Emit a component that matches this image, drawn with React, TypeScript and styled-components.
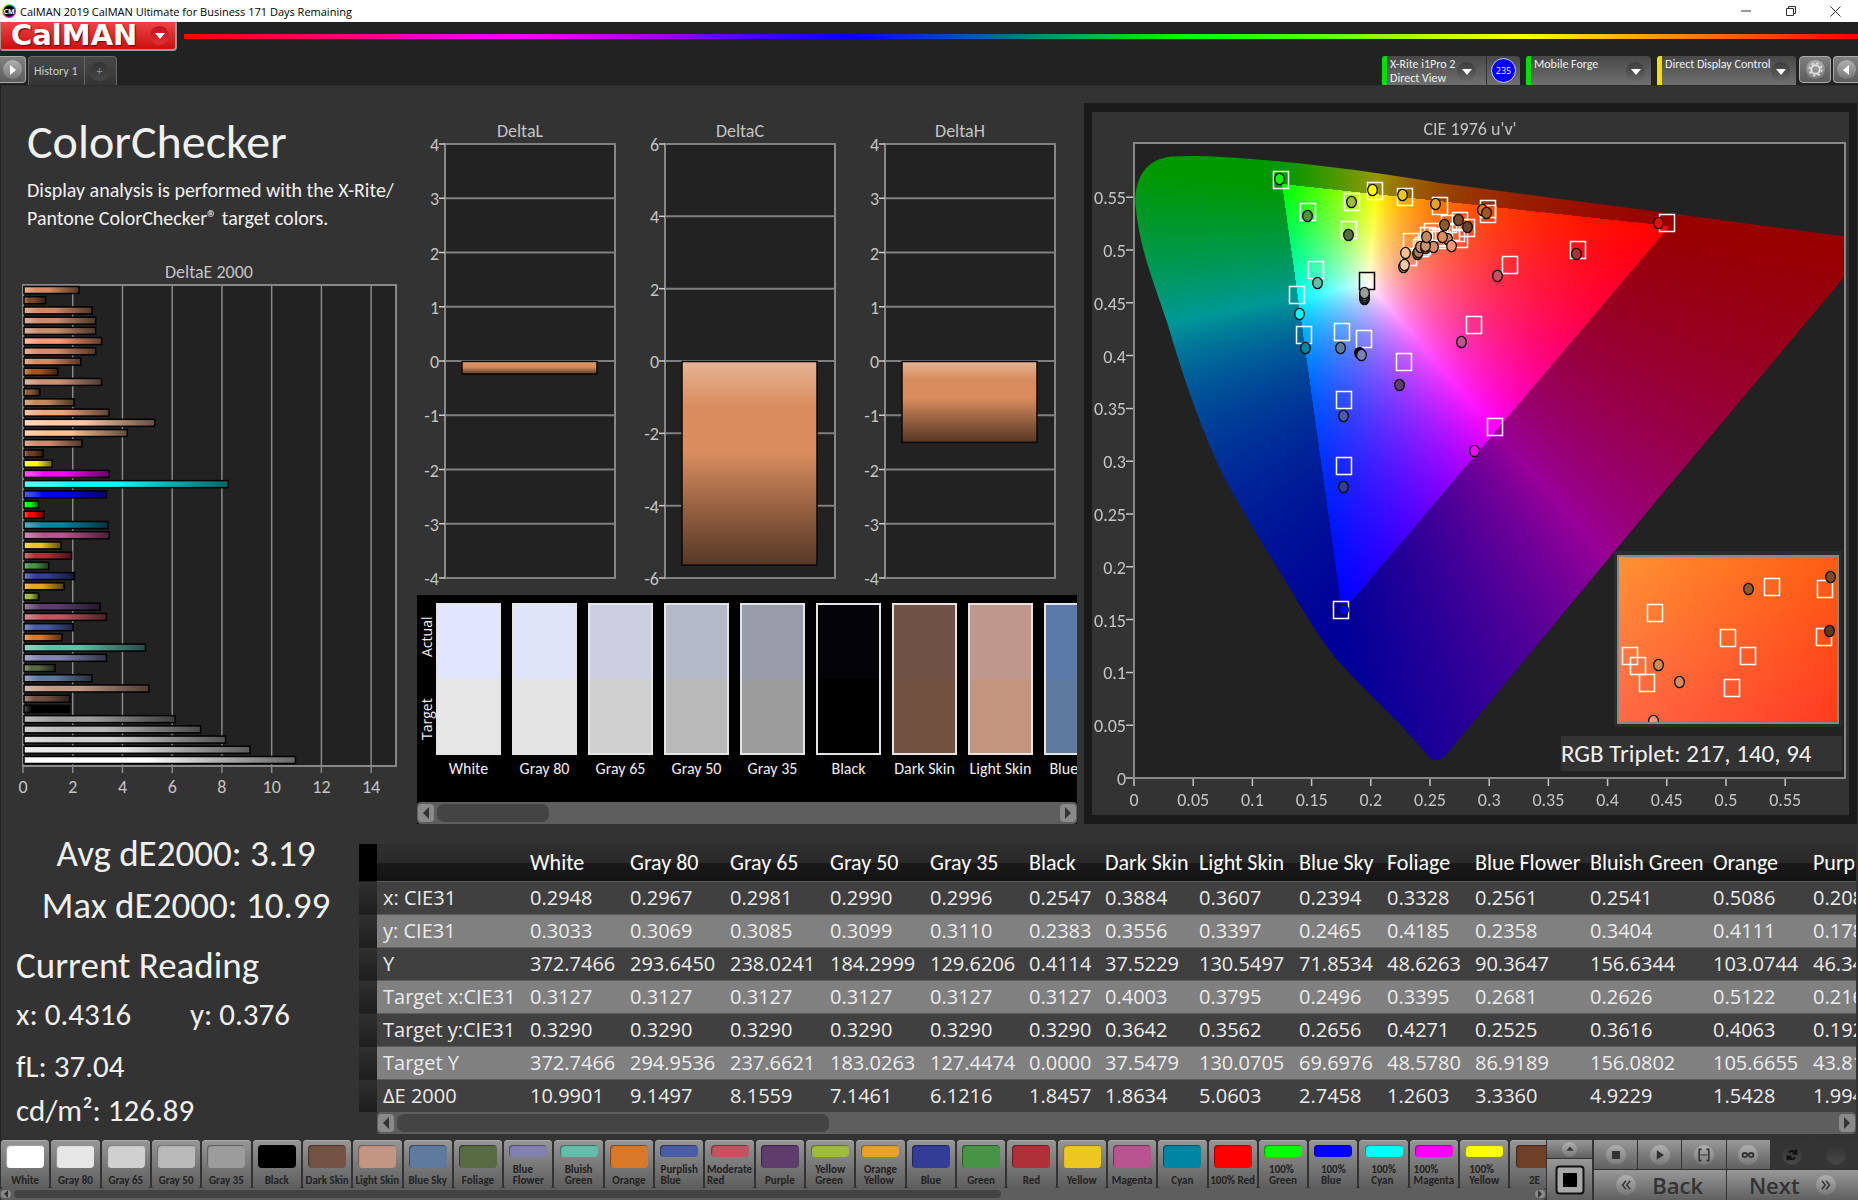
import React, { useLayoutEffect, useRef } from "react";
import styled, { createGlobalStyle } from "styled-components";

const humanist = `Carlito, Lato, "Open Sans", sans-serif`;
const interfaceFont = `"Open Sans", "Noto Sans", sans-serif`;

const GlobalStyle = createGlobalStyle`
  *, *::before, *::after { box-sizing: border-box; }
  body { margin: 0; background: #333; color: #f0f0f0; font-family: ${humanist}; }
  button { font: inherit; color: inherit; border: 0; margin: 0; padding: 0; cursor: pointer; }
  h1, h2, p { margin: 0; font-weight: 400; }
  svg, canvas { display: block; }
`;

/* ---------- data ---------- */

type Patch = { name: string; color: string; lines?: string[] };

const patches: Patch[] = [
  { name: "White", color: "#ffffff" },
  { name: "Gray 80", color: "#e6e6e6" },
  { name: "Gray 65", color: "#d0d0d0" },
  { name: "Gray 50", color: "#b9b9b9" },
  { name: "Gray 35", color: "#9c9c9c" },
  { name: "Black", color: "#000000" },
  { name: "Dark Skin", color: "#735244" },
  { name: "Light Skin", color: "#c29682" },
  { name: "Blue Sky", color: "#5e7a9c" },
  { name: "Foliage", color: "#596b42" },
  { name: "Blue Flower", color: "#8280b0", lines: ["Blue", "Flower"] },
  { name: "Bluish Green", color: "#63bda8", lines: ["Bluish", "Green"] },
  { name: "Orange", color: "#d97829" },
  { name: "Purplish Blue", color: "#4a5ca3", lines: ["Purplish", "Blue"] },
  { name: "Moderate Red", color: "#c25461", lines: ["Moderate", "Red"] },
  { name: "Purple", color: "#5c3d6b" },
  { name: "Yellow Green", color: "#9ebb40", lines: ["Yellow", "Green"] },
  { name: "Orange Yellow", color: "#e6a12e", lines: ["Orange", "Yellow"] },
  { name: "Blue", color: "#333d96" },
  { name: "Green", color: "#479447" },
  { name: "Red", color: "#b03038" },
  { name: "Yellow", color: "#edc721" },
  { name: "Magenta", color: "#ba5491" },
  { name: "Cyan", color: "#0085a3" },
  { name: "100% Red", color: "#ff0000" },
  { name: "100% Green", color: "#00ff00", lines: ["100%", "Green"] },
  { name: "100% Blue", color: "#0000ff", lines: ["100%", "Blue"] },
  { name: "100% Cyan", color: "#00ffff", lines: ["100%", "Cyan"] },
  { name: "100% Magenta", color: "#ff00ff", lines: ["100%", "Magenta"] },
  { name: "100% Yellow", color: "#ffff00", lines: ["100%", "Yellow"] },
  { name: "2E", color: "#6f4028" },
];

const deltaE: [number, string][] = [
  [2.22, "#d98c5e"], [0.88, "#7a4a28"], [2.76, "#cc8a66"], [2.9, "#c98b6c"], [2.9, "#c68e6c"],
  [3.14, "#ff9a72"], [2.9, "#d68a68"], [2.3, "#d98860"], [1.37, "#a3561f"], [3.14, "#c99476"],
  [0.64, "#8a5a32"], [2.03, "#c08a5a"], [3.44, "#f2a67c"], [5.29, "#ffc8a8"], [4.18, "#ffc090"],
  [2.35, "#c98b68"], [0.78, "#6f4028"], [1.14, "#ffff00"], [3.45, "#ff00ff"], [8.27, "#00ffff"],
  [3.34, "#0000ff"], [0.59, "#00ff00"], [0.82, "#ff0000"], [3.4, "#0085a3"], [3.45, "#ba5491"],
  [1.5, "#edc721"], [1.93, "#b03038"], [1.0, "#479447"], [2.04, "#333d96"], [1.62, "#e6a12e"],
  [0.59, "#9ebb40"], [3.08, "#5c3d6b"], [3.34, "#c25461"], [1.99, "#4a5ca3"], [1.54, "#d97829"],
  [4.92, "#63bda8"], [3.34, "#8280b0"], [1.26, "#596b42"], [2.75, "#5e7a9c"], [5.06, "#c29682"],
  [1.86, "#735244"], [1.85, "#000000"], [6.12, "#9c9c9c"], [7.15, "#b9b9b9"], [8.16, "#d0d0d0"],
  [9.15, "#e6e6e6"], [10.99, "#ffffff"],
];

const swatches = [
  { name: "White", actual: "#e1e5ff", target: "#e6e6e6" },
  { name: "Gray 80", actual: "#dfe4f8", target: "#e4e4e4" },
  { name: "Gray 65", actual: "#cbcfe1", target: "#d0d0d0" },
  { name: "Gray 50", actual: "#b4b9c9", target: "#b9b9b9" },
  { name: "Gray 35", actual: "#999cab", target: "#9c9c9c" },
  { name: "Black", actual: "#030308", target: "#000000" },
  { name: "Dark Skin", actual: "#6f5146", target: "#735141" },
  { name: "Light Skin", actual: "#bf978c", target: "#c3957f" },
  { name: "Blue Sky", actual: "#5b7aaa", target: "#5d7b9e" },
];

const tableColumns: [string, number][] = [
  ["White", 100], ["Gray 80", 100], ["Gray 65", 100], ["Gray 50", 100], ["Gray 35", 99],
  ["Black", 76], ["Dark Skin", 94], ["Light Skin", 100], ["Blue Sky", 88], ["Foliage", 88],
  ["Blue Flower", 115], ["Bluish Green", 123], ["Orange", 100], ["Purplish Blue", 130],
];

const tableRows: [string, string[]][] = [
  ["x: CIE31", "0.2948 0.2967 0.2981 0.2990 0.2996 0.2547 0.3884 0.3607 0.2394 0.3328 0.2561 0.2541 0.5086 0.2083".split(" ")],
  ["y: CIE31", "0.3033 0.3069 0.3085 0.3099 0.3110 0.2383 0.3556 0.3397 0.2465 0.4185 0.2358 0.3404 0.4111 0.1782".split(" ")],
  ["Y", "372.7466 293.6450 238.0241 184.2999 129.6206 0.4114 37.5229 130.5497 71.8534 48.6263 90.3647 156.6344 103.0744 46.3477".split(" ")],
  ["Target x:CIE31", "0.3127 0.3127 0.3127 0.3127 0.3127 0.3127 0.4003 0.3795 0.2496 0.3395 0.2681 0.2626 0.5122 0.2160".split(" ")],
  ["Target y:CIE31", "0.3290 0.3290 0.3290 0.3290 0.3290 0.3290 0.3642 0.3562 0.2656 0.4271 0.2525 0.3616 0.4063 0.1921".split(" ")],
  ["Target Y", "372.7466 294.9536 237.6621 183.0263 127.4474 0.0000 37.5479 130.0705 69.6976 48.5780 86.9189 156.0802 105.6655 43.8112".split(" ")],
  ["ΔE 2000", "10.9901 9.1497 8.1559 7.1461 6.1216 1.8457 1.8634 5.0603 2.7458 1.2603 3.3360 4.9229 1.5428 1.9940".split(" ")],
];

/* ---------- frame ---------- */

const Shell = styled.div`
  min-height: 100vh;
  display: flex;
  flex-direction: column;
  background: #222;
  overflow: hidden;
`;

const TitleBar = styled.header`
  height: 22px;
  flex: none;
  display: flex;
  align-items: center;
  gap: 4px;
  padding: 0 2px;
  background: #fff;
  color: #000;
  font: 11px ${interfaceFont};
`;

const AppBadge = styled.span`
  width: 14px;
  height: 14px;
  display: grid;
  place-items: center;
  border-radius: 50%;
  color: #fff;
  font-size: 7px;
  font-weight: 700;
  background: radial-gradient(circle, #000 5px, transparent 6px),
    conic-gradient(#4f4, #06f, #80f, #f0c, #f60, #fe0, #4f4);
`;

const TitleText = styled.span`
  flex: 1;
  white-space: nowrap;
`;

const WindowButton = styled.button`
  width: 41px;
  height: 22px;
  display: grid;
  place-items: center;
  background: none;
`;

const BrandRow = styled.div`
  height: 33px;
  flex: none;
  display: flex;
  align-items: flex-start;
  gap: 7px;
`;

const BrandButton = styled.button`
  && { color: #fff; }
  width: 177px;
  height: 29px;
  display: flex;
  align-items: center;
  justify-content: space-between;
  padding: 0 6px 0 10px;
  border: 1px solid #999;
  border-width: 0 2px 2px 1px;
  border-radius: 0 0 4px 3px;
  background: linear-gradient(#e44, #c91010);
`;

const BrandName = styled.span`
  font: 700 29px/27px "DejaVu Sans", sans-serif;
  text-shadow: 1px 1px 1px #600;
`;

const Spectrum = styled.div`
  flex: 1;
  height: 5px;
  margin-top: 12px;
  background: linear-gradient(90deg, #f00, #f0f, #00f, #0f0, #ff0, #f00);
`;

const Toolbar = styled.nav`
  height: 31px;
  flex: none;
  display: flex;
  align-items: flex-start;
  padding-top: 1px;
  border-bottom: 1px solid #2c2c2c;
  font-size: 12px;
`;

const Disc = styled.span<{ $size: number; $tone?: "red" | "dark" | "dim" | "light" }>`
  width: ${(p) => p.$size}px;
  height: ${(p) => p.$size}px;
  flex: none;
  display: grid;
  place-items: center;
  border-radius: 50%;
  background: ${(p) =>
    ({
      red: "linear-gradient(#c01020, #e23030)",
      dark: "linear-gradient(#3c3c3c, #666)",
      dim: "linear-gradient(#333, #484848)",
      light: "linear-gradient(#b0b0b0, #787878)",
    })[p.$tone ?? "dark"]};
`;

const SquareButton = styled.button<{ $width: number; $side?: "left" | "right" }>`
  width: ${(p) => p.$width}px;
  height: 27px;
  display: grid;
  place-items: center;
  border: 1px solid #aaa;
  border-left-width: ${(p) => (p.$side === "left" ? 0 : 1)}px;
  border-right-width: ${(p) => (p.$side === "right" ? 0 : 1)}px;
  border-radius: ${(p) => (p.$side === "left" ? "0 4px 4px 0" : p.$side === "right" ? "4px 0 0 4px" : "4px")};
  background: linear-gradient(#808080, #5c5c5c);
`;

const TabGroup = styled.div`
  display: flex;
  margin-left: 2px;
  border: 1px solid #666;
  border-bottom: 0;
  border-radius: 4px 4px 0 0;
  background: linear-gradient(#484848, #353535);
`;

const Tab = styled.button`
  height: 28px;
  min-width: 32px;
  padding: 0 6px 0 5px;
  display: grid;
  place-items: center;
  background: none;
  && { color: #ccc; }
  & + & { border-left: 1px solid #666; }
  & > ${Disc} { color: #888; }
`;

const Devices = styled.div`
  display: flex;
  gap: 6px;
  margin-left: auto;
`;

const Device = styled.div<{ $color: string; $width: number }>`
  width: ${(p) => p.$width}px;
  height: 29px;
  display: flex;
  border-left: 5px solid ${(p) => p.$color};
  border-radius: 3px 4px 0 0;
  background: linear-gradient(#484848, #707070);
`;

const DeviceMenu = styled.button`
  flex: 1;
  display: flex;
  justify-content: space-between;
  padding: 0 6px 0 3px;
  background: none;
  text-align: left;
  line-height: 14px;
  white-space: nowrap;
  && { color: #eee; }
  &:not(:last-child) { padding-right: 10px; }
  & > ${Disc} { margin-top: 6px; margin-left: -8px; }
`;

const DeviceName = styled.span`
  padding-top: 1px;
`;

const LevelButton = styled.button`
  width: 34px;
  display: grid;
  place-items: center;
  background: none;
  && { border-left: 1px solid #333; }
`;

const Level = styled.span`
  width: 25px;
  height: 25px;
  display: grid;
  place-items: center;
  border: 1px solid #ccd;
  border-radius: 50%;
  background: #00f;
  font: 9px ${interfaceFont};
`;

const ToolButtons = styled.div`
  display: flex;
  gap: 2px;
  margin-left: 3px;
`;

/* ---------- workspace ---------- */

const Workspace = styled.main`
  flex: 1;
  border-left: 1px solid #222;
  padding-top: 17px;
  background: #333;
`;

const Overview = styled.div`
  display: grid;
  grid-template-columns: minmax(0, 416fr) minmax(0, 667fr) minmax(0, 774fr);
`;

const Intro = styled.section`
  padding-top: 9px;
`;

const Heading = styled.h1`
  padding-left: 26px;
  font-size: 48px;
  line-height: 60px;
`;

const Description = styled.p`
  padding: 4px 0 0 26px;
  font-size: 20px;
  line-height: 28px;
`;

const DeltaEChart = styled.svg`
  width: 100%;
  margin-top: 26px;
`;

const Middle = styled.section`
  padding: 14px 7px 0 0;
`;

const DeltaRow = styled.div`
  display: grid;
  grid-template-columns: repeat(3, 1fr);
`;

const ChartText = styled.text`
  fill: #c4c4c4;
  font-family: ${humanist};
  font-size: 18px;
`;

const StripPanel = styled.div`
  background: #000;
`;

const Strip = styled.div`
  height: 207px;
  display: flex;
  gap: 11px;
  padding: 8px 0 0 19px;
  overflow: hidden;
  position: relative;
`;

const SideLabels = styled.div`
  position: absolute;
  left: 0;
  top: 0;
  width: 19px;
  height: 166px;
  display: flex;
  flex-direction: row-reverse;
  writing-mode: vertical-rl;
  transform: rotate(180deg);
  font: 14px/19px ${interfaceFont};
`;

const SideLabel = styled.span`
  flex: 1;
  text-align: center;
`;

const SwatchItem = styled.figure`
  flex: none;
  width: 65px;
  margin: 0;
`;

const SwatchBox = styled.div<{ $actual: string; $target: string }>`
  height: 152px;
  border: 2px solid #e4e4e4;
  background: linear-gradient(${(p) => p.$actual} 50%, ${(p) => p.$target} 50%);
`;

const SwatchName = styled.figcaption`
  padding-top: 4px;
  font-size: 16px;
  line-height: 20px;
  text-align: center;
  white-space: nowrap;
`;

const Gamut = styled.section`
  position: relative;
  margin-right: 1px;
  border: solid #1a1a1a;
  border-width: 9px 8px;
  background: #333;
`;

const GamutCanvas = styled.canvas`
  width: 100%;
`;

const GamutOverlay = styled.svg`
  position: absolute;
  inset: 0;
  width: 100%;
`;

const Triplet = styled.text`
  fill: #f0f0f0;
  font-family: ${humanist};
  font-size: 25px;
`;

/* ---------- scroll bars ---------- */

const BarRoot = styled.div<{ $height: number }>`
  height: ${(p) => p.$height}px;
  display: flex;
  align-items: stretch;
  padding: 2px 1px;
  background: #5e5e5e;
  border-radius: 4px;
`;

const BarArrow = styled.button<{ $width: number }>`
  width: ${(p) => p.$width}px;
  flex: none;
  display: grid;
  place-items: center;
  border-radius: 4px;
  background: #8a8a8a;
`;

const BarTrack = styled.div`
  flex: 1;
  padding: 0 3px;
`;

const BarThumb = styled.div`
  height: 100%;
  border-radius: 7px;
  background: #444;
`;

function ScrollBar({ height, share, label }: { height: number; share: number; label: string }) {
  const arrow = height > 16 ? 16 : 10;
  const h = height > 16 ? 12 : 8;
  return (
    <BarRoot $height={height} role="group" aria-label={label}>
      <BarArrow $width={arrow} aria-label="Scroll left">
        <svg width={h / 2} height={h} viewBox="0 0 6 12"><path d="M6 0v12L0 6z" fill="#333" /></svg>
      </BarArrow>
      <BarTrack><BarThumb style={{ width: `${share}%` }} /></BarTrack>
      <BarArrow $width={arrow} aria-label="Scroll right">
        <svg width={h / 2} height={h} viewBox="0 0 6 12"><path d="M0 0v12l6-6z" fill="#333" /></svg>
      </BarArrow>
    </BarRoot>
  );
}

/* ---------- readings and table ---------- */

const Results = styled.div`
  display: grid;
  grid-template-columns: 358px minmax(0, 1fr);
`;

const Readings = styled.section`
  padding: 4px 0 0 15px;
  font-size: 31px;
  line-height: 44px;
`;

const Summary = styled.div`
  padding-right: 3px;
  font-size: 37px;
  line-height: 52px;
  text-align: center;
`;

const ReadingTitle = styled.h2`
  font-size: 37px;
  line-height: 48px;
  padding-top: 10px;
`;

const Coordinates = styled.div`
  display: grid;
  grid-template-columns: 174px 1fr;
  line-height: 48px;
  padding-bottom: 6px;
`;

const TablePanel = styled.section`
  margin: 20px 2px 6px 0;
  overflow: hidden;
`;

const DataTable = styled.table`
  table-layout: fixed;
  width: 1578px;
  border-collapse: separate;
  border-spacing: 0;
  font: 20px ${interfaceFont};
`;

const HeadCell = styled.th`
  height: 37px;
  padding: 0 0 0 6px;
  background: linear-gradient(#2e2e2e, #2a2a2a 50%, #191919 50%, #131313);
  font: 22px ${humanist};
  text-align: left;
  white-space: nowrap;
  color: #fff;
`;

const HeadGutter = styled.td`
  padding: 0;
  background: #000;
`;

const Gutter = styled.td`
  padding: 0;
  border-top: 1px solid #222;
  background: linear-gradient(#303030, #1e1e1e);
`;

const Row = styled.tr<{ $alt: boolean }>`
  & > th, & > td:not(${Gutter}) {
    height: 33px;
    padding: 0 0 0 6px;
    border-top: 1px solid #5c5c5c;
    background: ${(p) => (p.$alt ? "#808080" : "#404040")};
    color: #ececec;
    font-weight: 400;
    line-height: 30px;
    text-align: left;
    white-space: nowrap;
  }
`;

const TableScroll = styled.div`
  margin-left: 18px;
`;

/* ---------- footer ---------- */

const Footer = styled.footer`
  height: 60px;
  flex: none;
  display: grid;
  grid-template-columns: minmax(0, 1fr) 45px 265px;
  gap: 1px;
  background: #333;
`;

const Palette = styled.div`
  display: flex;
  gap: 2px;
  height: 48px;
  padding-left: 1px;
  overflow: hidden;
`;

const PatchButton = styled.button`
  && { color: #222; }
  flex: 0 0 calc(100% / 30.7 - 2px);
  min-width: 0;
  display: flex;
  flex-direction: column;
  align-items: center;
  justify-content: space-between;
  padding: 5px 0 2px;
  border-radius: 4px 4px 2px 2px;
  background: linear-gradient(#969696, #5e5e5e);
  box-shadow: inset 0 1px #aaa;
  font-size: 11px;
  font-weight: 700;
  line-height: 11px;
  white-space: nowrap;
  text-align: left;
`;

const PatchColor = styled.span<{ $color: string; $short: boolean }>`
  width: 38px;
  height: ${(p) => (p.$short ? 12 : 23)}px;
  border-radius: 4px;
  background: ${(p) => p.$color};
  box-shadow: inset 1px 1px 1px #0006;
`;

const PatchLabel = styled.span`
  & > span { display: block; }
`;

const Selector = styled.div`
  display: grid;
  grid-template-rows: 18px 1fr;
  gap: 1px;
`;

const PanelButton = styled.button<{ $off?: boolean }>`
  display: flex;
  align-items: center;
  justify-content: center;
  gap: 16px;
  background: ${(p) => (p.$off ? "#343434" : "linear-gradient(#989898, #606060)")};
  && { color: #333; }
  font: 600 22px ${interfaceFont};
`;

const Transport = styled.div`
  display: grid;
  grid-template-rows: 29px 30px;
  gap: 1px;
  padding-left: 1px;
`;

const ButtonRow = styled.div`
  display: grid;
  grid-auto-flow: column;
  grid-auto-columns: 1fr;
  gap: 1px;
`;

/* ---------- charts ---------- */

const shade = (color: string, id: string, vertical = false) => (
  <linearGradient id={id} key={id} x1="0" y1="0" x2={vertical ? 0 : 1} y2={vertical ? 1 : 0}>
    <stop offset="0" stopColor={`color-mix(in srgb, ${color}, white 34%)`} />
    <stop offset=".22" stopColor={color} />
    <stop offset=".45" stopColor={color} />
    <stop offset="1" stopColor={`color-mix(in srgb, ${color}, black 60%)`} />
  </linearGradient>
);

function DeltaE() {
  const left = 22, top = 27, width = 373, height = 481;
  const x = (v: number) => left + (v * width) / 15;
  const pitch = (height - 11) / (deltaE.length - 1);
  return (
    <DeltaEChart viewBox="0 0 416 546" role="img" aria-label="DeltaE 2000 by patch">
      <defs>{deltaE.map(([, c], i) => shade(c, `e${i}`))}</defs>
      <ChartText x="208" y="20" textAnchor="middle">DeltaE 2000</ChartText>
      <rect x={left} y={top} width={width} height={height} fill="#222" stroke="#888" strokeWidth="2" />
      {[0, 2, 4, 6, 8, 10, 12, 14].map((v) => (
        <g key={v}>
          <path d={`M${x(v)} ${top}v${height + 7}`} stroke="#888" strokeWidth="1.5" />
          <ChartText x={x(v)} y="535" textAnchor="middle">{v}</ChartText>
        </g>
      ))}
      {deltaE.map(([v], i) => (
        <rect key={i} x={left + 1} y={top + 1.5 + i * pitch} width={v * 24.7} height="7" fill={`url(#e${i})`} stroke="#000" strokeWidth="1.5" />
      ))}
    </DeltaEChart>
  );
}

function DeltaBar({ title, limit, step, value }: { title: string; limit: number; step: number; value: number }) {
  const top = 27, height = 434;
  const y = (v: number) => top + ((limit - v) / (2 * limit)) * height;
  const ticks = Array.from({ length: (2 * limit) / step + 1 }, (_, i) => limit - i * step);
  const id = `bar${title}`;
  return (
    <svg viewBox="0 0 220 478" width="100%" role="img" aria-label={title}>
      <defs>{shade("#d98c5e", id, true)}</defs>
      <ChartText x="103" y="20" textAnchor="middle">{title}</ChartText>
      <rect x="28" y={top} width="170" height={height} fill="#222" stroke="#888" strokeWidth="2" />
      {ticks.map((v) => (
        <g key={v}>
          <path d={`M28 ${y(v)}h170`} stroke="#808080" strokeWidth="2" />
          <path d={`M22 ${y(v)}h6`} stroke="#ccc" strokeWidth="1.5" />
          <ChartText x="22" y={y(v) + 7} textAnchor="end">{v}</ChartText>
        </g>
      ))}
      <rect x="45" y={y(0) + 0.5} width="135" height={y(value) - y(0)} fill={`url(#${id})`} stroke="#0a0a0a" strokeWidth="1.5" />
    </svg>
  );
}

const plot = { left: 42, top: 31, width: 711, height: 635, u: 1184, v: 1056 };
const px = (u: number) => plot.left + u * plot.u;
const py = (v: number) => plot.top + plot.height - v * plot.v;
const inset = { x: 526, y: 444, w: 220, h: 167 };

const locus =
  "M80 44.500 Q106 43.500 131 45 C200 49 270 58 348 71 L753 124.500 V164 L565 388 L354 643 Q343 653 336 644 " +
  "C310 611 275 582 241 543 C215 508 195 470 178 444 C160 415 146 390 133 367 C110 320 90 262 75 210 " +
  "C58 160 48 135 44 98 C40 65 56 46 80 44.500 Z";

function chromaticity(u: number, v: number): number[] {
  const d = 6 * u - 16 * v + 12;
  const x = (9 * u) / d, y = (4 * v) / d;
  const X = x / y, Z = (1 - x - y) / y;
  const rgb = [
    3.2406 * X - 1.5372 - 0.4986 * Z,
    -0.9689 * X + 1.8758 + 0.0415 * Z,
    0.0557 * X - 0.204 + 1.057 * Z,
  ];
  const inside = Math.min(...rgb) >= -0.004;
  const peak = Math.max(...rgb);
  return rgb.map((c) => (Math.max(0, c) / peak) * (inside ? 255 : 152));
}

function paintGamut(canvas: HTMLCanvasElement) {
  const ctx = canvas.getContext("2d")!;
  const w = canvas.width, h = canvas.height;
  const layer = document.createElement("canvas");
  layer.width = w;
  layer.height = h;
  const lctx = layer.getContext("2d")!;
  const image = lctx.createImageData(w, h);
  const corners = [[255, 146, 50], [255, 92, 18], [255, 104, 70], [255, 58, 34]];
  for (let j = 0; j < h; j++) {
    for (let i = 0; i < w; i++) {
      const s = (i - inset.x) / inset.w, t = (j - inset.y) / inset.h;
      const inBox = s >= 0 && s <= 1 && t >= 0 && t <= 1;
      const c = inBox
        ? [0, 1, 2].map((k) => (corners[0][k] * (1 - s) + corners[1][k] * s) * (1 - t) + (corners[2][k] * (1 - s) + corners[3][k] * s) * t)
        : chromaticity((i - plot.left) / plot.u, (plot.top + plot.height - j) / plot.v);
      const o = (j * w + i) * 4;
      image.data[o] = c[0];
      image.data[o + 1] = c[1];
      image.data[o + 2] = c[2];
      image.data[o + 3] = 255;
    }
  }
  lctx.putImageData(image, 0, 0);
  ctx.fillStyle = "#333";
  ctx.fillRect(0, 0, w, h);
  ctx.fillStyle = "#222";
  ctx.fillRect(plot.left, plot.top, plot.width, plot.height);
  ctx.save();
  ctx.clip(new Path2D(locus));
  ctx.drawImage(layer, 0, 0);
  ctx.restore();
  ctx.fillStyle = "#2c2c2c";
  ctx.fillRect(inset.x - 4, inset.y - 5, inset.w + 8, inset.h + 9);
  ctx.drawImage(layer, inset.x, inset.y, inset.w, inset.h, inset.x, inset.y, inset.w, inset.h);
}

const targets: [number, number][] = [
  [189, 68], [283, 79], [313, 85], [348, 94], [260, 90], [216, 100], [257, 118], [224, 158], [205, 183],
  [212, 223], [250, 220], [272, 227], [312, 250], [382, 213], [252, 288], [252, 354], [403, 315],
  [396, 97], [396, 102], [575, 111], [486, 138], [418, 153], [249, 498],
  [319, 130], [340, 120], [348, 126], [336, 124], [357, 112], [368, 109], [375, 116], [368, 127],
  [365, 121], [360, 120], [345, 125], [331, 134], [329, 136], [317, 145], [346, 128],
];

const measured: [number, number, string][] = [
  [187, 67, "#00ff00"], [280, 78, "#ffff00"], [310, 83, "#edc721"], [343, 92, "#e6a12e"],
  [259, 90, "#9ebb40"], [215, 104, "#479447"], [256, 123, "#596b42"], [225, 171, "#63bda8"],
  [207, 202, "#00ffff"], [213, 236, "#0085a3"], [248, 236, "#5e7a9c"], [267, 241, "#000"],
  [269, 243, "#8280b0"], [307, 273, "#5c3d6b"], [369, 230, "#ba5491"], [382, 339, "#ff00ff"],
  [251, 304, "#4a5ca3"], [251, 375, "#333d96"], [405, 164, "#c25461"], [272, 187, "#222"],
  [272, 185, "#777"], [272, 183, "#888"], [272, 181, "#9c9c9c"], [390, 98, "#d97829"],
  [394, 101, "#a3561f"], [566, 111, "#ff0000"], [484, 142, "#b03038"], [251, 498, "#0000ff"],
  [325, 142, "#8a5f48"], [326, 140, "#b57e60"], [311, 155, "#c89070"], [312, 153, "#ffc8a8"],
  [313, 141, "#ffc090"], [328, 135, "#c89070"], [333, 136, "#b57e60"], [341, 135, "#d68a68"],
  [333, 134, "#d0906a"], [334, 125, "#c08a5a"], [355, 127, "#c98560"], [350, 125, "#d98c5e"],
  [359, 134, "#ff9a72"], [352, 113, "#8a5a32"], [366, 108, "#7a4a28"], [375, 115, "#6f4028"],
];

const insetTargets: [number, number][] = [
  [680, 475], [733, 477], [563, 501], [636, 526], [732, 525], [656, 544], [538, 544], [546, 554], [555, 571], [640, 576],
];
const insetMeasured: [number, number, string][] = [
  [656, 477, "#8a5a32"], [738, 465, "#7a4a28"], [737, 519, "#5f3820"], [566, 553, "#d08a5a"], [587, 570, "#d98c5e"], [561, 609, "#ff9a72"],
];

const Target = ({ at, dark }: { at: [number, number]; dark?: boolean }) => (
  <rect x={at[0] - 7.5} y={at[1] - 8.5} width="15" height="17" fill="none" stroke={dark ? "#000" : "#fff"} strokeWidth="1.5" />
);
const Dot = ({ at }: { at: [number, number, string] }) => (
  <ellipse cx={at[0] + 0.5} cy={at[1]} rx="4.8" ry="5.6" fill={at[2]} stroke="#111" strokeWidth="1.3" />
);

function CieChart() {
  const ref = useRef<HTMLCanvasElement>(null);
  useLayoutEffect(() => {
    if (ref.current) paintGamut(ref.current);
  }, []);
  const steps = Array.from({ length: 12 }, (_, i) => i * 5);
  const format = (n: number) => String(n / 100);
  return (
    <Gamut>
      <GamutCanvas ref={ref} width={757} height={703} />
      <GamutOverlay viewBox="0 0 757 703" role="img" aria-label="CIE 1976 chromaticity">
        <clipPath id="insetClip"><rect x={inset.x} y={inset.y} width={inset.w} height={inset.h} /></clipPath>
        <ChartText x="378" y="23" textAnchor="middle">CIE 1976 u'v'</ChartText>
        <rect x={plot.left} y={plot.top} width={plot.width} height={plot.height} fill="none" stroke="#888" strokeWidth="2" />
        {steps.map((n) => (
          <g key={n}>
            <path d={`M${px(n / 100)} 667v7M${plot.left - 8} ${py(n / 100)}h7`} stroke="#c4c4c4" strokeWidth="1.5" />
            <ChartText x={px(n / 100)} y="694" textAnchor="middle">{format(n)}</ChartText>
            <ChartText x={plot.left - 8} y={py(n / 100) + 7} textAnchor="end">{format(n)}</ChartText>
          </g>
        ))}
        {targets.map((t, i) => <Target key={i} at={t} />)}
        <Target at={[275, 169]} dark />
        {measured.map((m, i) => <Dot key={i} at={m} />)}
        <g clipPath="url(#insetClip)">
          {insetTargets.map((t, i) => <Target key={i} at={t} />)}
          {insetMeasured.map((m, i) => <Dot key={i} at={m} />)}
        </g>
        <rect x={inset.x} y={inset.y} width={inset.w} height={inset.h} fill="none" stroke="#888" strokeWidth="2" />
        <rect x="469" y="624" width="281" height="35" fill="#333" />
        <Triplet x="469" y="650">RGB Triplet: 217, 140, 94</Triplet>
      </GamutOverlay>
    </Gamut>
  );
}

/* ---------- small glyphs ---------- */

const DownArrow = () => <svg width="10" height="6"><path d="M0 0h10L5 6z" fill="#fff" /></svg>;

const glyphs = {
  stop: <path d="M5 5h10v10H5z" />,
  play: <path d="M6 4l9 6-9 6z" />,
  range: <path d="M7 3H4v14h3M13 3h3v14h-3M6 10h2M9 10h2M12 10h2" fill="none" stroke="currentColor" strokeWidth="2" />,
  loop: <path d="M10 10c-2-3-6-3-6 0s4 3 6 0 6-3 6 0-4 3-6 0z" fill="none" stroke="currentColor" strokeWidth="2" />,
  refresh: <path d="M15 9a5 5 0 0 0-9-2M5 11a5 5 0 0 0 9 2M15.500 3v5h-5M4.500 17v-5h5" fill="none" stroke="#111" strokeWidth="2.500" />,
  back: <path d="M10 4l-5 6 5 6M16 4l-5 6 5 6" fill="none" stroke="currentColor" strokeWidth="2" />,
  next: <path d="M4 4l5 6-5 6M10 4l5 6-5 6" fill="none" stroke="currentColor" strokeWidth="2" />,
  up: <path d="M4 13l6-7 6 7z" />,
  blank: null,
};

const Glyph = ({ name, size = 18 }: { name: keyof typeof glyphs; size?: number }) => (
  <svg width={size} height={size} viewBox="0 0 20 20" fill="currentColor">{glyphs[name]}</svg>
);

export default function App() {
  return (
    <Shell>
      <GlobalStyle />
      <TitleBar>
        <AppBadge>CM</AppBadge>
        <TitleText>CalMAN 2019 CalMAN Ultimate for Business 171 Days Remaining</TitleText>
        <WindowButton aria-label="Minimize"><svg width="10" height="10"><path d="M0 5h10" stroke="#333" /></svg></WindowButton>
        <WindowButton aria-label="Restore"><svg width="12" height="12" fill="none" stroke="#333"><path d="M1.500 3.500h7v7h-7zM3.500 3.500v-2h7v7h-2" /></svg></WindowButton>
        <WindowButton aria-label="Close"><svg width="11" height="11"><path d="M.5.5l10 10M10.500.5l-10 10" stroke="#333" /></svg></WindowButton>
      </TitleBar>
      <BrandRow>
        <BrandButton>
          <BrandName>CalMAN</BrandName>
          <Disc $size={19} $tone="red"><DownArrow /></Disc>
        </BrandButton>
        <Spectrum />
      </BrandRow>
      <Toolbar>
        <SquareButton $width={26} $side="left" aria-label="Open panel">
          <Disc $size={19} $tone="light"><svg width="6" height="10"><path d="M0 0v10l6-5z" fill="#fff" /></svg></Disc>
        </SquareButton>
        <TabGroup>
          <Tab>History 1</Tab>
          <Tab aria-label="Add history"><Disc $size={19} $tone="dim">+</Disc></Tab>
        </TabGroup>
        <Devices>
          <Device $color="#00e000" $width={138}>
            <DeviceMenu><DeviceName>X-Rite i1Pro 2<br />Direct View</DeviceName><Disc $size={19}><DownArrow /></Disc></DeviceMenu>
            <LevelButton><Level>235</Level></LevelButton>
          </Device>
          <Device $color="#00e000" $width={125}>
            <DeviceMenu><DeviceName>Mobile Forge</DeviceName><Disc $size={19}><DownArrow /></Disc></DeviceMenu>
          </Device>
          <Device $color="#f0e000" $width={139}>
            <DeviceMenu><DeviceName>Direct Display Control</DeviceName><Disc $size={19}><DownArrow /></Disc></DeviceMenu>
          </Device>
        </Devices>
        <ToolButtons>
          <SquareButton $width={32} aria-label="Settings">
            <Disc $size={19} $tone="light">
              <svg width="15" height="15" viewBox="0 0 16 16" fill="none" stroke="#ddd">
                <circle cx="8" cy="8" r="4.500" strokeWidth="2" />
                <circle cx="8" cy="8" r="6.500" strokeWidth="2" strokeDasharray="2.550 2.550" />
              </svg>
            </Disc>
          </SquareButton>
          <SquareButton $width={25} $side="right" aria-label="Collapse">
            <Disc $size={19} $tone="light"><svg width="6" height="10"><path d="M6 0v10L0 5z" fill="#fff" /></svg></Disc>
          </SquareButton>
        </ToolButtons>
      </Toolbar>

      <Workspace>
        <Overview>
          <Intro>
            <Heading>ColorChecker</Heading>
            <Description>
              Display analysis is performed with the X-Rite/<br />
              Pantone ColorChecker® target colors.
            </Description>
            <DeltaE />
          </Intro>
          <Middle>
            <DeltaRow>
              <DeltaBar title="DeltaL" limit={4} step={1} value={-0.23} />
              <DeltaBar title="DeltaC" limit={6} step={2} value={-5.63} />
              <DeltaBar title="DeltaH" limit={4} step={1} value={-1.49} />
            </DeltaRow>
            <StripPanel>
              <Strip>
                <SideLabels><SideLabel>Actual</SideLabel><SideLabel>Target</SideLabel></SideLabels>
                {swatches.map((s) => (
                  <SwatchItem key={s.name}>
                    <SwatchBox $actual={s.actual} $target={s.target} />
                    <SwatchName>{s.name}</SwatchName>
                  </SwatchItem>
                ))}
              </Strip>
              <ScrollBar height={22} share={18} label="Swatches" />
            </StripPanel>
          </Middle>
          <CieChart />
        </Overview>

        <Results>
          <Readings>
            <Summary>
              <p>Avg dE2000: 3.19</p>
              <p>Max dE2000: 10.99</p>
            </Summary>
            <ReadingTitle>Current Reading</ReadingTitle>
            <Coordinates><span>x: 0.4316</span><span>y: 0.376</span></Coordinates>
            <p>fL: 37.04</p>
            <p>cd/m²: 126.89</p>
          </Readings>
          <TablePanel>
            <DataTable>
              <colgroup>
                <col style={{ width: 18 }} />
                <col style={{ width: 147 }} />
                {tableColumns.map(([name, width]) => <col key={name} style={{ width }} />)}
              </colgroup>
              <thead>
                <tr>
                  <HeadGutter />
                  <HeadCell aria-label="Quantity" />
                  {tableColumns.map(([name]) => <HeadCell key={name} scope="col">{name}</HeadCell>)}
                </tr>
              </thead>
              <tbody>
                {tableRows.map(([name, values], r) => (
                  <Row key={name} $alt={r % 2 === 1}>
                    <Gutter />
                    <th scope="row">{name}</th>
                    {values.map((v, i) => <td key={i}>{v}</td>)}
                  </Row>
                ))}
              </tbody>
            </DataTable>
            <TableScroll><ScrollBar height={22} share={30} label="Readings table" /></TableScroll>
          </TablePanel>
        </Results>
      </Workspace>

      <Footer>
        <div>
          <Palette>
            {patches.map((p) => (
              <PatchButton key={p.name}>
                <PatchColor $color={p.color} $short={!!p.lines} />
                <PatchLabel>{(p.lines ?? [p.name]).map((l) => <span key={l}>{l}</span>)}</PatchLabel>
              </PatchButton>
            ))}
          </Palette>
          <ScrollBar height={12} share={65} label="Patches" />
        </div>
        <Selector>
          <PanelButton aria-label="Expand"><Disc $size={15} $tone="light"><Glyph name="up" size={12} /></Disc></PanelButton>
          <PanelButton aria-label="Pattern window">
            <svg width="30" height="30" viewBox="0 0 30 30">
              <rect x="1.500" y="1.500" width="27" height="27" rx="3" fill="#a8a8a8" stroke="#111" strokeWidth="2" />
              <rect x="8" y="8" width="14" height="14" fill="#000" />
            </svg>
          </PanelButton>
        </Selector>
        <Transport>
          <ButtonRow>
            <PanelButton aria-label="Stop"><Disc $size={20} $tone="light"><Glyph name="stop" size={16} /></Disc></PanelButton>
            <PanelButton aria-label="Read"><Disc $size={20} $tone="light"><Glyph name="play" size={16} /></Disc></PanelButton>
            <PanelButton aria-label="Read series"><Disc $size={20} $tone="light"><Glyph name="range" size={16} /></Disc></PanelButton>
            <PanelButton aria-label="Read continuously"><Disc $size={20} $tone="light"><Glyph name="loop" /></Disc></PanelButton>
            <PanelButton $off aria-label="Refresh"><Disc $size={20} $tone="dim"><Glyph name="refresh" size={16} /></Disc></PanelButton>
            <PanelButton $off aria-label="Record"><Disc $size={20} $tone="dim"><Glyph name="blank" /></Disc></PanelButton>
          </ButtonRow>
          <ButtonRow>
            <PanelButton><Disc $size={20} $tone="light"><Glyph name="back" size={14} /></Disc>Back</PanelButton>
            <PanelButton>Next<Disc $size={20} $tone="light"><Glyph name="next" size={14} /></Disc></PanelButton>
          </ButtonRow>
        </Transport>
      </Footer>
    </Shell>
  );
}
